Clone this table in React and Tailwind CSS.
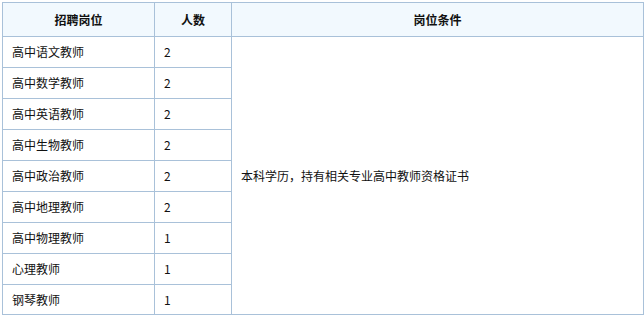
const rows = [
  { name: '高中语文教师', count: 2 },
  { name: '高中数学教师', count: 2 },
  { name: '高中英语教师', count: 2 },
  { name: '高中生物教师', count: 2 },
  { name: '高中政治教师', count: 2 },
  { name: '高中地理教师', count: 2 },
  { name: '高中物理教师', count: 1 },
  { name: '心理教师', count: 1 },
  { name: '钢琴教师', count: 1 },
];

const cell = 'border border-[#a9c1d9] px-[9px] text-left align-middle';

export default function App() {
  return (
    <div className="bg-white w-[644px] h-[316px] pt-[2px] pl-[2px] font-['SimSun','Noto_Sans_CJK_SC',sans-serif] text-[12px] leading-none text-[#111]">
      <table className="w-[641px] table-fixed border-collapse">
        <colgroup>
          <col className="w-[152px]" />
          <col className="w-[77px]" />
          <col className="w-[412px]" />
        </colgroup>
        <thead>
          <tr className="h-[34px] bg-[#f2f9fe]">
            <th className="border border-[#a9c1d9] font-bold text-center">招聘岗位</th>
            <th className="border border-[#a9c1d9] font-bold text-center">人数</th>
            <th className="border border-[#a9c1d9] font-bold text-center">岗位条件</th>
          </tr>
        </thead>
        <tbody>
          {rows.map((r, i) => (
            <tr key={r.name} className={i === rows.length - 1 ? 'h-[30px]' : 'h-[31px]'}>
              <td className={cell}>{r.name}</td>
              <td className={cell}>{r.count}</td>
              {i === 0 && (
                <td rowSpan={rows.length} className={cell}>
                  本科学历，持有相关专业高中教师资格证书
                </td>
              )}
            </tr>
          ))}
        </tbody>
      </table>
    </div>
  );
}
